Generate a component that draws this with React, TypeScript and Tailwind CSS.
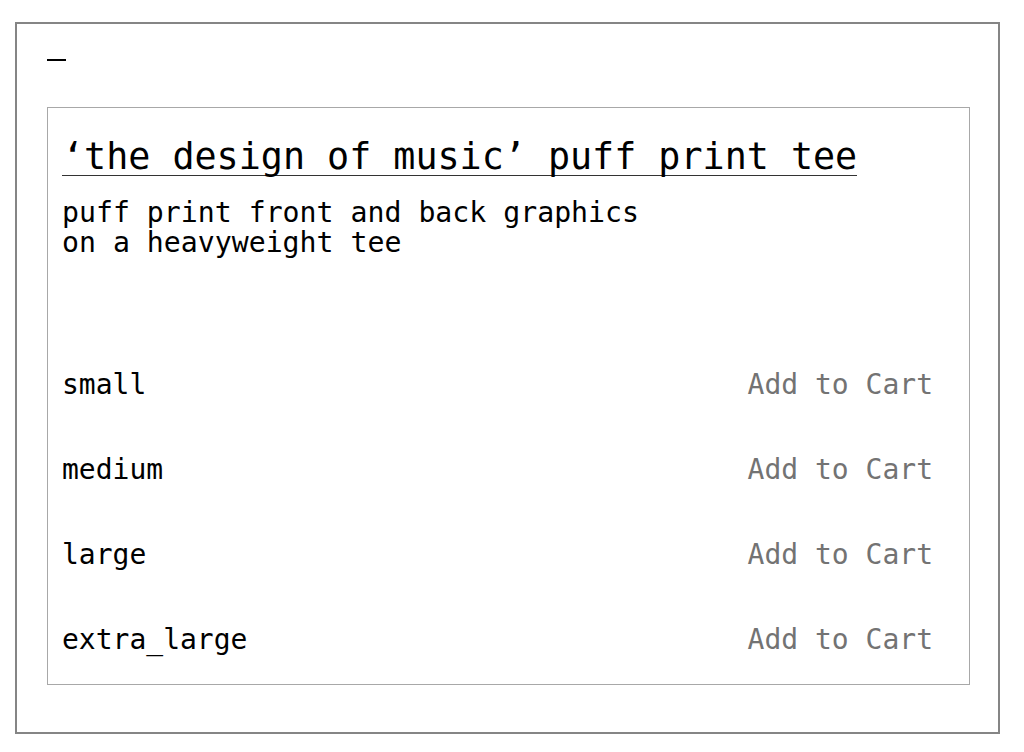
import React from 'react';

const sizes = ['small', 'medium', 'large', 'extra_large'];

const mono = { fontFamily: '"DejaVu Sans Mono", "Liberation Mono", monospace' };

export default function App() {
  return (
    <div className="min-h-screen bg-white text-black" style={mono}>
      <div className="ml-[15px] mt-[22px] w-[985px] h-[712px] border-2 border-[#858585] pl-[30px] pr-[28px]">
        <div className="mt-[35px] w-[19px] h-[2px] bg-black" />
        <section className="mt-[46px] h-[578px] border border-[#a8a8a8] flex flex-col">
          <div className="pl-[14px] pt-[31px]">
            <h1 className="inline-block text-[36.7px] leading-[36px] font-normal border-b border-[#333]">
              ‘the design of music’ puff print tee
            </h1>
            <p className="mt-[22px] text-[28.2px] leading-[30px]">
              puff print front and back graphics
              <br />
              on a heavyweight tee
            </p>
          </div>
          <ul className="mt-auto pb-[2px]">
            {sizes.map((s) => (
              <li key={s} className="h-[85px] flex items-center justify-between pl-[14px] pr-[36px] text-[28px] leading-[32px]">
                <span>{s}</span>
                <button className="text-[#737373] cursor-pointer">Add to Cart</button>
              </li>
            ))}
          </ul>
        </section>
      </div>
    </div>
  );
}
